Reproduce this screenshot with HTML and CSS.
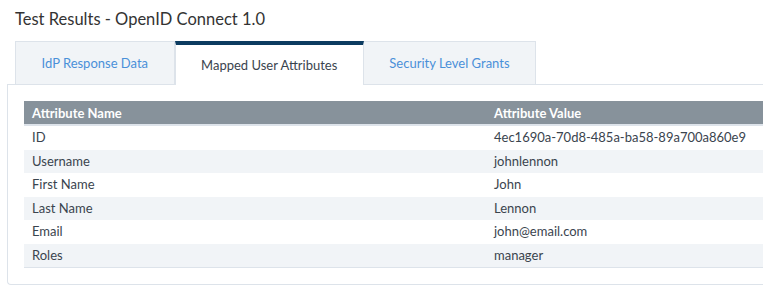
FILE: index.html
```html
<!DOCTYPE html>
<html lang="en">
<head>
    <meta charset="UTF-8">
    <meta name="viewport" content="width=device-width, initial-scale=1.0">
    <title>Test Results - OpenID Connect 1.0</title>
    <link rel="stylesheet" href="styles.css">
</head>
<body>
    <h1 class="title">Test Results - OpenID Connect 1.0</h1>

    <div class="tabs">
        <div class="tab">IdP Response Data</div>
        <div class="tab active">Mapped User Attributes</div>
        <div class="tab">Security Level Grants</div>
    </div>

    <div class="panel">
        <table class="attr-table">
            <thead>
                <tr>
                    <th class="name-col">Attribute Name</th>
                    <th>Attribute Value</th>
                </tr>
            </thead>
            <tbody>
                <tr><td>ID</td><td>4ec1690a-70d8-485a-ba58-89a700a860e9</td></tr>
                <tr><td>Username</td><td>johnlennon</td></tr>
                <tr><td>First Name</td><td>John</td></tr>
                <tr><td>Last Name</td><td>Lennon</td></tr>
                <tr><td>Email</td><td>john@email.com</td></tr>
                <tr><td>Roles</td><td>manager</td></tr>
            </tbody>
        </table>
    </div>
</body>
</html>
```

FILE: styles.css
```css
body {
    font-family: Lato, "Open Sans", sans-serif;
    margin: 0;
    padding: 0;
    background-color: white;
    color: #3a444e;
}

.title {
    margin: 0;
    padding: 9px 15px 0;
    height: 32px;
    font-size: 16.5px;
    font-weight: normal;
    color: #333;
}

.tabs {
    display: flex;
    margin-left: 15px;
    position: relative;
    z-index: 1;
}

.tab {
    height: 42px;
    line-height: 42px;
    padding: 0 25.5px;
    font-size: 13px;
    color: #4a90d9;
    background-color: #f1f4f7;
    border: 1px solid #dde3ea;
    border-bottom: none;
}

.tab + .tab {
    border-left: none;
}

.tab.active {
    background-color: white;
    color: #3a444e;
    border-top: 4px solid #0c3b60;
    height: 40px;
    line-height: 40px;
    border-left: 1px solid #dde3ea;
    border-right: 1px solid #dde3ea;
}

.active + .tab {
    border-left: none;
}

.panel {
    margin-left: 7px;
    padding: 16px 0 16px 16px;
    border: 1px solid #dde3ea;
    border-right: none;
    border-bottom-left-radius: 4px;
    margin-top: -1px;
}

.attr-table {
    width: 100%;
    border-collapse: collapse;
    font-size: 13px;
}

.attr-table th {
    background-color: #87929b;
    color: white;
    font-weight: bold;
    text-align: left;
    padding: 0 8px;
    height: 23px;
    border-bottom: 2px solid #dde3ea;
}

.attr-table .name-col {
    width: 446px;
}

.attr-table td {
    padding: 2px 8px;
    line-height: 19.5px;
}

.attr-table tbody tr:nth-child(even) {
    background-color: #f1f4f7;
}

.attr-table tbody tr:last-child {
    border-bottom: 1px solid #dde3ea;
}
```
